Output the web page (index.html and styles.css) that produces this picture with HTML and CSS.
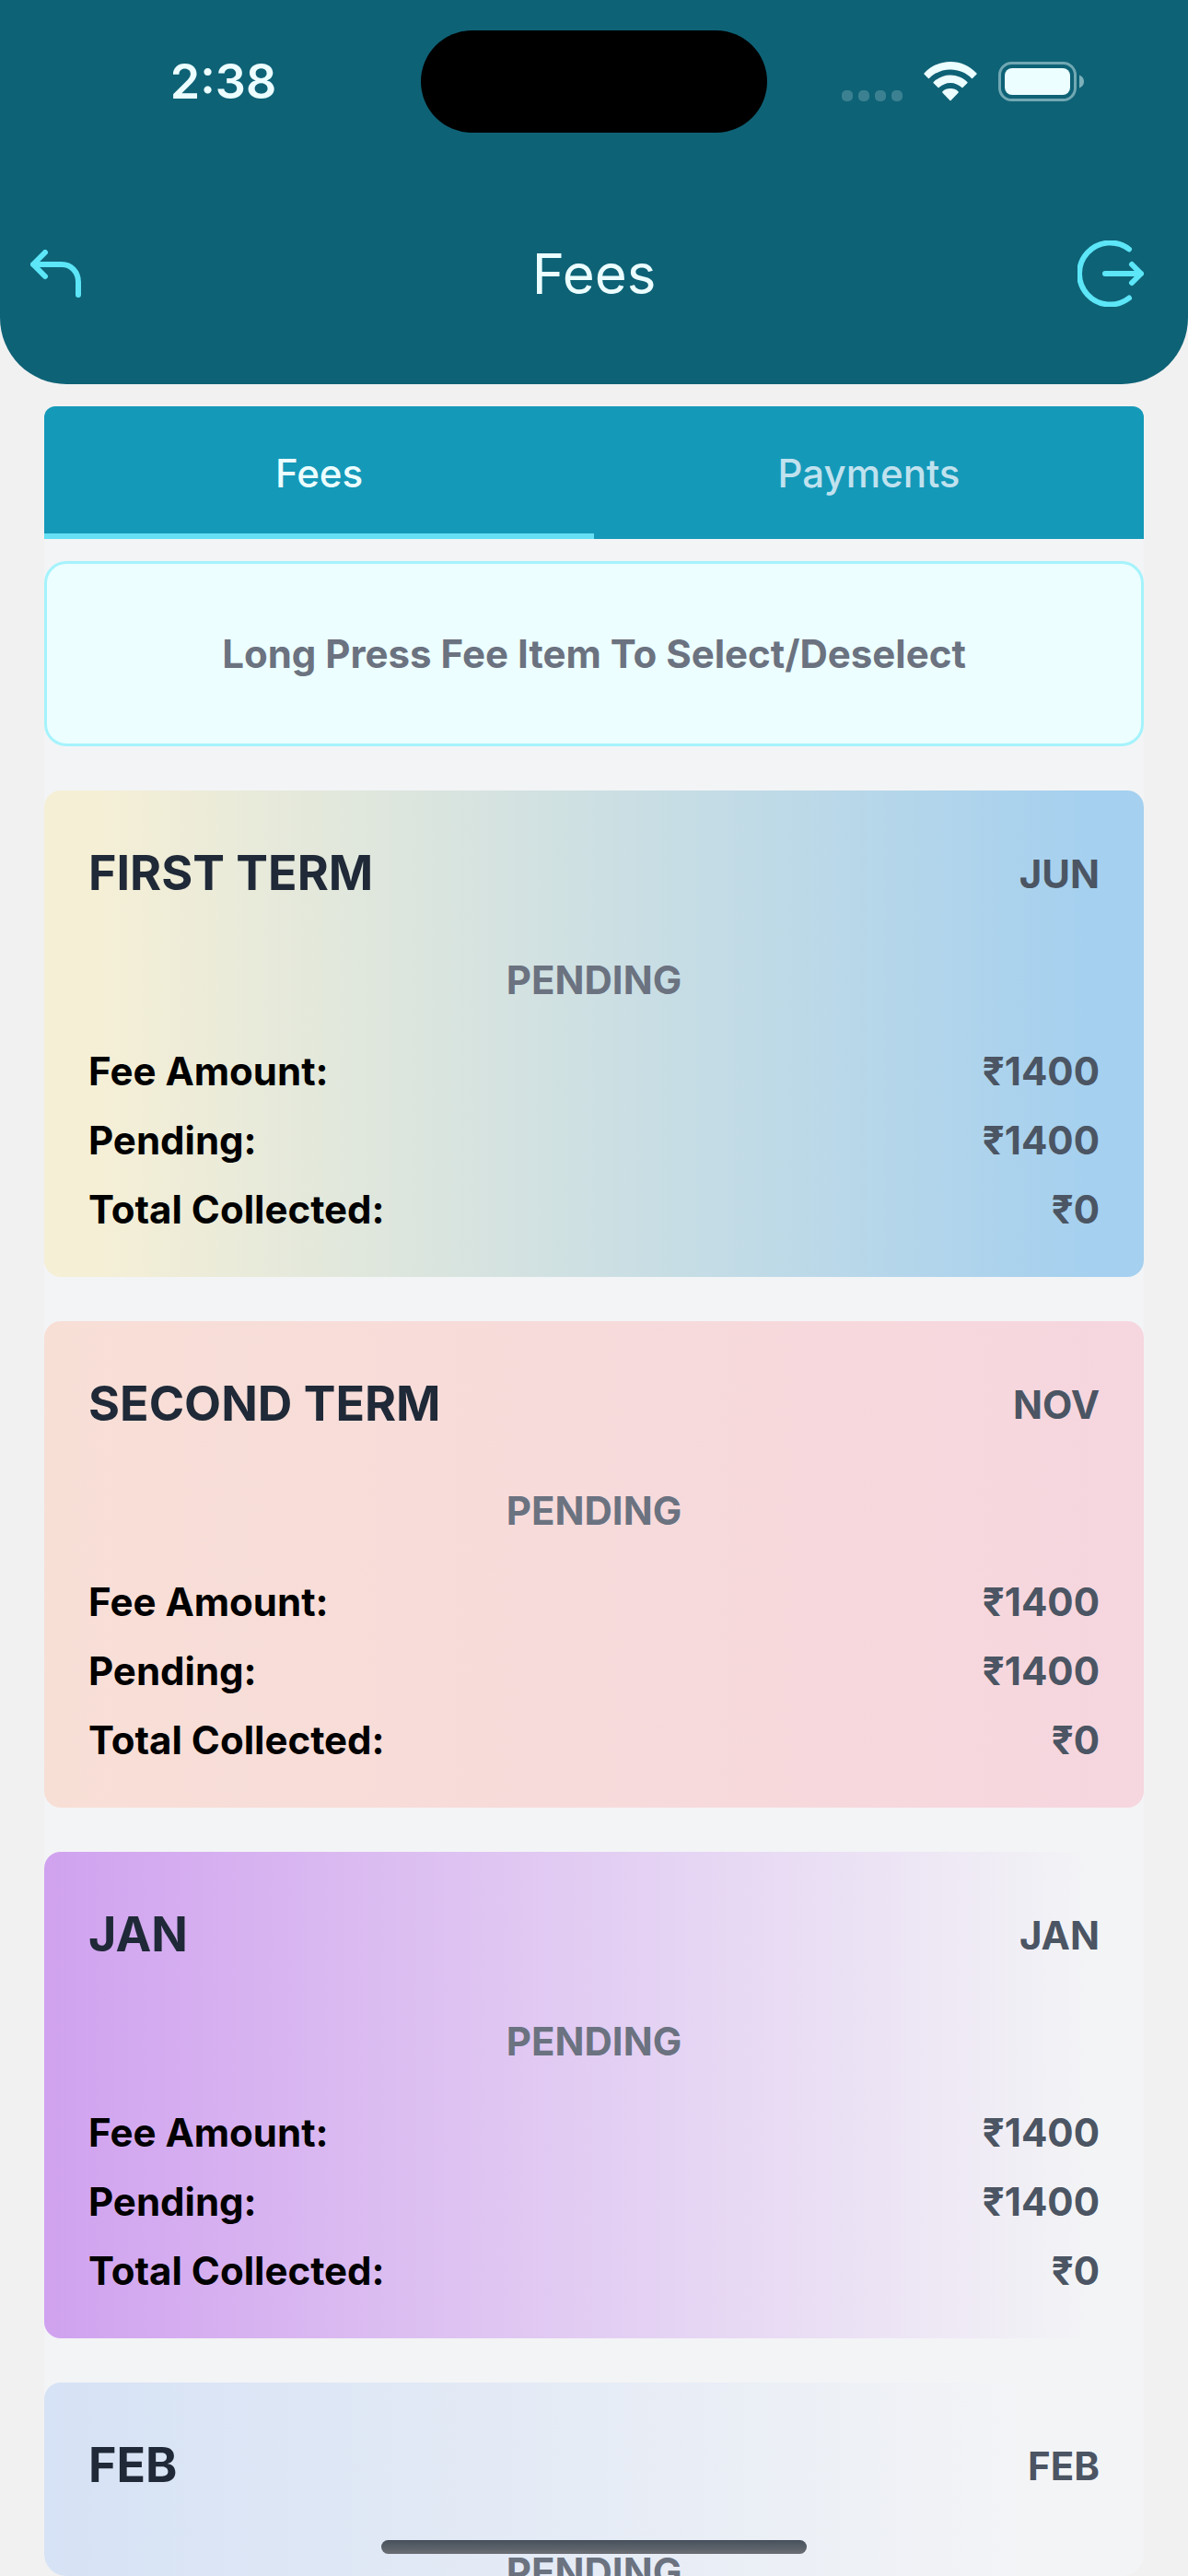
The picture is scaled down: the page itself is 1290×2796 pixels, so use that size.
FILE: index.html
```
<!DOCTYPE html>
<html lang="en">
<head>
    <meta charset="UTF-8">
    <meta name="viewport" content="width=device-width, initial-scale=1.0">
    <title>Fees</title>
    <link rel="stylesheet" href="styles.css">
</head>
<body>
    <header class="header">
        <div class="status-bar">
            <span class="time">2:38</span>
            <div class="island"></div>
            <div class="status-icons">
                <svg class="signal" viewBox="0 0 66 12" aria-hidden="true">
                    <rect x="0" y="0" width="12" height="12" rx="5"/>
                    <rect x="18" y="0" width="12" height="12" rx="5"/>
                    <rect x="36" y="0" width="12" height="12" rx="5"/>
                    <rect x="54" y="0" width="12" height="12" rx="5"/>
                </svg>
                <svg class="wifi" viewBox="0 0 58 43" aria-hidden="true">
                    <path d="M29 0C40 0 50 4.500 57.500 12.500Q58 13 57.500 13.500L53 18Q52.500 18.500 52 18C46 12 38 8.500 29 8.500S12 12 6 18Q5.500 18.500 5 18L.5 13.500Q0 13 .5 12.500C8 4.500 18 0 29 0Z"/>
                    <path d="M29 14.500C36 14.500 42.500 17.300 47.300 22Q48 22.600 47.300 23.200L42.500 28Q42 28.500 41.400 28C38 25 33.800 23 29 23S20 25 16.600 28Q16 28.500 15.500 28L10.700 23.200Q10 22.600 10.700 22C15.500 17.300 22 14.500 29 14.500Z"/>
                    <path d="M29 29C32.300 29 35.300 30.200 37.500 32.200Q38.200 33 37.500 33.800L29.600 42Q29 42.600 28.400 42L20.500 33.800Q19.800 33 20.500 32.200C22.700 30.200 25.700 29 29 29Z"/>
                </svg>
                <svg class="battery" viewBox="0 0 93 43" aria-hidden="true">
                    <rect class="battery-case" x="1.500" y="1.500" width="82" height="40" rx="13"/>
                    <rect class="battery-level" x="7" y="7" width="71" height="29" rx="8"/>
                    <path class="battery-cap" d="M88 14.500Q93 16.500 93 21.500T88 28.500Z"/>
                </svg>
            </div>
        </div>
        <div class="nav-bar">
            <button class="icon-button" type="button" aria-label="Back">
                <svg class="back-icon" viewBox="0 0 56 52" aria-hidden="true">
                    <path d="M16 3L3 16L16 29M3 16H34C44 16 52 24 52 35V49"/>
                </svg>
            </button>
            <h1>Fees</h1>
            <button class="icon-button logout" type="button" aria-label="Log out">
                <svg class="logout-icon" viewBox="0 0 72 72" aria-hidden="true">
                    <path d="M56 9.500A33.500 33.500 0 1 0 56 62.500M30 36H69M59 26L69 36L59 46"/>
                </svg>
            </button>
        </div>
    </header>

    <main class="content">
        <div class="tabs" role="tablist">
            <button class="tab active" type="button" role="tab" aria-selected="true">Fees</button>
            <button class="tab" type="button" role="tab" aria-selected="false">Payments</button>
        </div>

        <p class="notice">Long Press Fee Item To Select/Deselect</p>

        <div class="fee-list">
            <article class="fee-card first">
                <div class="card-head">
                    <h2>FIRST TERM</h2>
                    <span class="month">JUN</span>
                </div>
                <p class="status">PENDING</p>
                <dl>
                    <div class="row"><dt>Fee Amount:</dt><dd>₹1400</dd></div>
                    <div class="row"><dt>Pending:</dt><dd>₹1400</dd></div>
                    <div class="row"><dt>Total Collected:</dt><dd>₹0</dd></div>
                </dl>
            </article>

            <article class="fee-card second">
                <div class="card-head">
                    <h2>SECOND TERM</h2>
                    <span class="month">NOV</span>
                </div>
                <p class="status">PENDING</p>
                <dl>
                    <div class="row"><dt>Fee Amount:</dt><dd>₹1400</dd></div>
                    <div class="row"><dt>Pending:</dt><dd>₹1400</dd></div>
                    <div class="row"><dt>Total Collected:</dt><dd>₹0</dd></div>
                </dl>
            </article>

            <article class="fee-card january">
                <div class="card-head">
                    <h2>JAN</h2>
                    <span class="month">JAN</span>
                </div>
                <p class="status">PENDING</p>
                <dl>
                    <div class="row"><dt>Fee Amount:</dt><dd>₹1400</dd></div>
                    <div class="row"><dt>Pending:</dt><dd>₹1400</dd></div>
                    <div class="row"><dt>Total Collected:</dt><dd>₹0</dd></div>
                </dl>
            </article>

            <article class="fee-card february">
                <div class="card-head">
                    <h2>FEB</h2>
                    <span class="month">FEB</span>
                </div>
                <p class="status">PENDING</p>
            </article>
        </div>
    </main>

    <div class="home-indicator"></div>
</body>
</html>
```
FILE: styles.css
```
* {
    box-sizing: border-box;
    margin: 0;
    padding: 0;
}
body {
    display: flex;
    flex-direction: column;
    height: 100vh;
    overflow: hidden;
    background-color: #f1f1f1;
    color: #000;
    font-family: Inter, "Noto Sans", sans-serif;
    font-size: 42px;
    line-height: 51px;
}
button {
    border: none;
    background: none;
    font: inherit;
    cursor: pointer;
}
svg {
    display: block;
}

/* header */
.header {
    flex: none;
    background-color: #0e6276;
    border-radius: 0 0 72px 72px;
    color: #ecfeff;
    padding-bottom: 84px;
}
.status-bar {
    display: grid;
    grid-template-columns: 1fr 376px 1fr;
    align-items: center;
    padding-top: 33px;
}
.time {
    padding-left: 28px;
    text-align: center;
    font-size: 52px;
    font-weight: 600;
}
.island {
    height: 111px;
    border-radius: 56px;
    background-color: #000;
}
.status-icons {
    display: flex;
    align-items: center;
    justify-content: flex-end;
    gap: 23px;
    padding-right: 113px;
    fill: #ecfeff;
}
.signal {
    width: 66px;
    align-self: flex-end;
    opacity: 0.2;
}
.wifi {
    width: 58px;
}
.battery {
    width: 93px;
}
.battery-case {
    fill: none;
    stroke: #ecfeff;
    stroke-width: 3;
    opacity: 0.45;
}
.battery-cap {
    opacity: 0.5;
}
.nav-bar {
    display: grid;
    grid-template-columns: 1fr auto 1fr;
    align-items: center;
    padding: 117px 33px 0;
}
.nav-bar h1 {
    font-size: 60px;
    font-weight: 400;
    line-height: 72px;
}
.icon-button {
    justify-self: start;
    color: #5ce6f7;
}
.icon-button svg {
    fill: none;
    stroke: currentColor;
    stroke-width: 6;
    stroke-linecap: round;
    stroke-linejoin: round;
}
.logout {
    justify-self: end;
    padding-right: 15px;
}
.back-icon {
    width: 56px;
}
.logout-icon {
    width: 72px;
}

/* tabs */
.content {
    flex: 1;
    min-height: 0;
    display: flex;
    flex-direction: column;
    gap: 24px;
    margin: 24px 48px 0;
    border-radius: 12px 12px 24px 24px;
    background-color: #f3f4f6;
    overflow: hidden;
}
.tabs {
    flex: none;
    display: flex;
    height: 144px;
    background-color: #1599b9;
}
.tab {
    flex: 1;
    border-top: 6px solid transparent;
    border-bottom: 6px solid transparent;
    color: #c0e2ee;
    font-weight: 500;
}
.tab.active {
    border-bottom-color: #67e0f5;
    color: #ecfeff;
}
.notice {
    flex: none;
    padding: 72px 24px;
    border: 3px solid #a5f3fc;
    border-radius: 24px;
    background-color: #ecfeff;
    color: #6b7280;
    font-weight: 700;
    text-align: center;
}

/* fee cards */
.fee-list {
    display: flex;
    flex-direction: column;
    gap: 48px;
    padding-top: 24px;
}
.fee-card {
    display: flex;
    flex-direction: column;
    gap: 48px;
    min-height: 528px;
    padding: 48px;
    border-radius: 18px;
    font-weight: 700;
}
.first {
    background: linear-gradient(to right, #f5efd6 5%, #a5d0ef 95%);
}
.second {
    background: linear-gradient(to right, #f8dfd6, #f6d6df);
}
.january {
    background: linear-gradient(to right, #d0a2ef, #f3f4f6 95%);
}
.february {
    background: linear-gradient(to right, #d6e2f5, #f3f4f6 90%);
}
.card-head,
.row {
    display: flex;
    align-items: center;
    justify-content: space-between;
}
.card-head h2 {
    color: #1f2937;
    font-size: 52px;
    font-weight: 700;
    line-height: 84px;
}
.month,
.row dd {
    color: #4b5563;
}
.status {
    color: #6b7280;
    text-align: center;
}
.fee-card dl {
    display: flex;
    flex-direction: column;
    gap: 24px;
}

.home-indicator {
    position: absolute;
    bottom: 24px;
    left: 50%;
    width: 462px;
    height: 15px;
    margin-left: -231px;
    border-radius: 8px;
    background: linear-gradient(to bottom, #46505c, #6b6e74);
}
```
